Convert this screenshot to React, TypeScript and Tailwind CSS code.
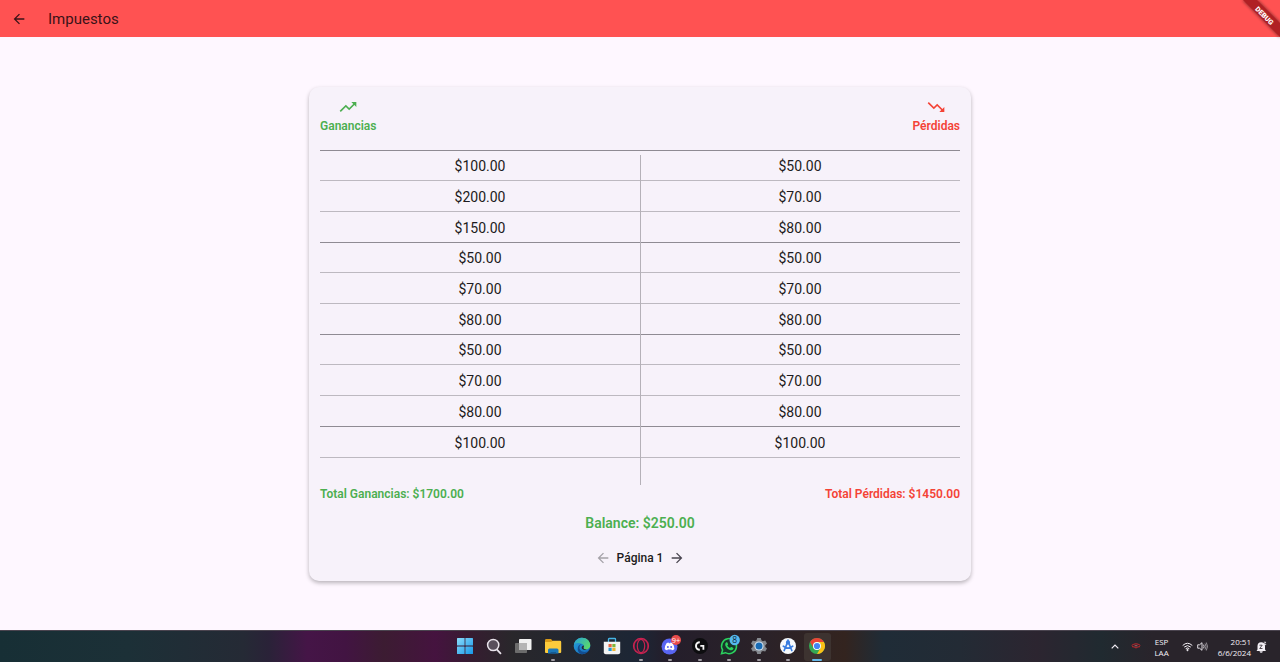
import type { ReactNode } from 'react';
import { MdArrowBack, MdArrowForward, MdTrendingDown, MdTrendingUp } from 'react-icons/md';

const rows: [number, number][] = [
  [100, 50],
  [200, 70],
  [150, 80],
  [50, 50],
  [70, 70],
  [80, 80],
  [50, 50],
  [70, 70],
  [80, 80],
  [100, 100],
];

const money = (value: number) => `$${value.toFixed(2)}`;

function DebugBanner() {
  return (
    <svg className="absolute top-0 right-0" width="40" height="40" viewBox="0 0 40 40" aria-hidden="true">
      <defs>
        <filter id="bannerShadow" x="-20%" y="-20%" width="140%" height="140%">
          <feGaussianBlur stdDeviation="1.6" />
        </filter>
      </defs>
      <path d="M2 0H18L40 22V38Z" fill="#000" opacity="0.4" filter="url(#bannerShadow)" />
      <path d="M3 0H17L40 23V37Z" fill="#b02024" />
      <text
        transform="translate(24.6 15.6) rotate(45)"
        y="2.6"
        textAnchor="middle"
        fontSize="7"
        fontWeight="900"
        fontFamily="Roboto, sans-serif"
        fill="#fff"
      >
        DEBUG
      </text>
    </svg>
  );
}

function TopBar() {
  return (
    <header className="relative flex h-[37px] shrink-0 items-center gap-[21px] bg-[#ff5252] pl-[11px] text-[#3a1318]">
      <button type="button" aria-label="Atrás">
        <MdArrowBack size={16} />
      </button>
      <h1 className="text-[15px] leading-5">Impuestos</h1>
      <DebugBanner />
    </header>
  );
}

function TaxCard() {
  return (
    <section className="w-full max-w-[662px] rounded-[10px] bg-[#f7f2fa] px-[11px] pt-[10px] pb-[13px] shadow-[0_2px_4px_rgba(0,0,0,0.28)]">
      <div className="flex justify-between text-[12px] leading-[18px] font-semibold">
        <div className="flex flex-col items-center text-[#4caf50]">
          <MdTrendingUp size={20} />
          <span>Ganancias</span>
        </div>
        <div className="flex flex-col items-center text-[#f44336]">
          <MdTrendingDown size={20} />
          <span>Pérdidas</span>
        </div>
      </div>

      <div className="relative mt-[15px] pb-[27px]">
        <table className="h-[308px] w-full table-fixed border-collapse border-t border-[#8f8b93] text-center text-[14px] leading-5 text-[#1d1b20]">
          <tbody>
            {rows.map(([gain, loss], index) => (
              <tr
                key={index}
                className={index % 3 === 2 ? 'border-b border-[#8f8b93]' : 'border-b border-[#bdb9c0]'}
              >
                <td className="pt-[2px]">{money(gain)}</td>
                <td className="pt-[2px]">{money(loss)}</td>
              </tr>
            ))}
          </tbody>
        </table>
        <div className="absolute top-[5px] bottom-0 left-1/2 w-px bg-[#b5b1b8]" />
      </div>

      <div className="flex justify-between text-[12px] leading-[18px] font-semibold">
        <span className="text-[#4caf50]">Total Ganancias: $1700.00</span>
        <span className="text-[#f44336]">Total Pérdidas: $1450.00</span>
      </div>
      <p className="mt-[10px] text-center text-[14px] leading-5 font-semibold text-[#4caf50]">Balance: $250.00</p>
      <nav className="mt-[15px] flex items-center justify-center gap-[6px] text-[12px] leading-5 font-medium text-[#1d1b20]">
        <button type="button" disabled aria-label="Página anterior" className="text-[#a5a2a8]">
          <MdArrowBack size={16} />
        </button>
        <span>Página 1</span>
        <button type="button" aria-label="Página siguiente" className="text-[#49454f]">
          <MdArrowForward size={16} />
        </button>
      </nav>
    </section>
  );
}

type AppItem = { name: string; running?: boolean; active?: boolean; art: ReactNode };

const apps: AppItem[] = [
  {
    name: 'Inicio',
    art: (
      <g fill="url(#winBlue)">
        <rect x="2" y="2" width="7.6" height="7.6" rx="0.5" />
        <rect x="10.4" y="2" width="7.6" height="7.6" rx="0.5" />
        <rect x="2" y="10.4" width="7.6" height="7.6" rx="0.5" />
        <rect x="10.4" y="10.4" width="7.6" height="7.6" rx="0.5" />
      </g>
    ),
  },
  {
    name: 'Buscar',
    art: (
      <g fill="#594f5c" stroke="#e8e2ea" strokeWidth="1.5" strokeLinecap="round">
        <path d="M13.2 13.8 16.500 17.300" strokeWidth="1.800" />
        <circle cx="9.2" cy="9" r="5.600" />
      </g>
    ),
  },
  {
    name: 'Vista de tareas',
    art: (
      <g>
        <rect x="2" y="7" width="12" height="10" rx="0.8" fill="#6c6c6c" />
        <rect x="6" y="3" width="12.5" height="11" rx="0.8" fill="#f1f1f1" />
        <path d="M6 7h8v7H6z" fill="#b5b5b5" />
      </g>
    ),
  },
  {
    name: 'Explorador',
    running: true,
    art: (
      <g>
        <path d="M2 4.2Q2 3 3.2 3H8l2 2.2v4H2z" fill="#d99a17" />
        <path d="M2 6h6l2-1.2h7q1.200 0 1.200 1.200v10q0 1-1 1H3q-1 0-1-1z" fill="#fccb3c" />
        <path d="M5 17.500v-3.500q0-1.500 1.500-1.500h7.500q1.500 0 1.500 1.500v3.500z" fill="#1c78b8" />
        <path d="M7.500 17.500v-1.500h5.500v1.500z" fill="#155b94" />
      </g>
    ),
  },
  {
    name: 'Edge',
    art: (
      <g>
        <circle cx="10" cy="10" r="8.300" fill="url(#edgeBlue)" />
        <path d="M2 8.500C3 4 6.500 1.700 10 1.700c5 0 8.300 3.600 8.300 7.500 0 2.600-2 4.200-4.300 4.200-2 0-2.900-.8-2.500-1.600.5-.8.6-1.300.3-2.200C10.800 7 5 5.800 2 8.500z" fill="url(#edgeGreen)" />
        <path d="M10 8.200c-2.800.8-3.200 4.400-1.200 6.300 1.900 1.800 5 2 7.700.2-1.500 2.200-4 3.600-6.500 3.600C6.500 17.500 5 14 6 11c.7-2 2.200-3 4-2.800z" fill="#134e91" />
        <path d="M11.800 9.600c.4 1-.3 1.600-.3 2.300 0 1 1.500 1.700 3.400 1.400-2 1.200-4.900.5-5.200-1.500-.1-1 .8-2.100 2.100-2.200z" fill="#2b292d" />
      </g>
    ),
  },
  {
    name: 'Microsoft Store',
    art: (
      <g>
        <path d="M6.500 7V3.200q0-.7.7-.7h5.600q.7 0 .7.700V7" fill="none" stroke="#46b6e6" strokeWidth="1.300" />
        <path d="M1.800 5.800h16.400v10.400q0 2-2 2H3.800q-2 0-2-2z" fill="#f3f3f3" />
        <path d="M6.500 8h3.200v3.200H6.500z" fill="#e9633c" />
        <path d="M10.300 8h3.200v3.200h-3.200z" fill="#7eb63a" />
        <path d="M6.500 11.800h3.200V15H6.500z" fill="#2598d4" />
        <path d="M10.300 11.800h3.200V15h-3.200z" fill="#edb431" />
      </g>
    ),
  },
  {
    name: 'Opera GX',
    running: true,
    art: (
      <g fill="none" stroke="#c92250">
        <circle cx="10" cy="10" r="7.500" strokeWidth="1.300" />
        <ellipse cx="10" cy="10" rx="3.700" ry="6.700" strokeWidth="1.200" />
        <path d="M7 3.700C2 6 2 14 7 16.300M13 3.700c5 2.300 5 10.300 0 12.600" strokeWidth="0.700" />
      </g>
    ),
  },
  {
    name: 'Discord',
    running: true,
    art: (
      <g>
        <circle cx="9.500" cy="10.500" r="8" fill="#5865f2" />
        <path d="M6.500 7.200q1-.6 2-.7l.4.700h1.300l.4-.700q1 .1 2 .7 1.800 2.600 1.800 5.800-1.200 1.200-2.600 1.300l-.6-1q-1.700.5-3.300 0l-.6 1q-1.400-.1-2.600-1.300 0-3.200 1.800-5.800z" fill="#fff" />
        <circle cx="7.900" cy="10.900" r="1" fill="#5865f2" />
        <circle cx="11.200" cy="10.900" r="1" fill="#5865f2" />
        <circle cx="16" cy="4" r="5" fill="#e84c4c" />
        <text x="16" y="6.600" textAnchor="middle" fontSize="7.500" fill="#fff">9+</text>
      </g>
    ),
  },
  {
    name: 'Logitech G HUB',
    running: true,
    art: (
      <g>
        <circle cx="10" cy="10" r="8" fill="#0d0d0f" />
        <path d="M9.800 6.200A3.800 3.800 0 1 0 9.800 13.800" fill="none" stroke="#f4f4f4" strokeWidth="2" />
        <path d="M10.300 9h4v4.800h-1.800v-3h-2.200z" fill="#f4f4f4" />
      </g>
    ),
  },
  {
    name: 'WhatsApp',
    running: true,
    art: (
      <g>
        <path d="M2.500 17.700 3.600 14a7.500 7.500 0 1 1 2.800 2.700z" fill="#18352a" stroke="#2bd25e" strokeWidth="1.500" />
        <path d="M7.200 6.300q.8-.4 1.200.3l.7 1.600q0 .5-.8 1.200 1 1.900 2.700 2.700l1-1q.3-.2.7 0l1.600.8q.4.300 0 1.100-.8 1.600-2.800 1.200-3.800-1-5.300-5Q5.900 7.400 7.200 6.300z" fill="#2bd25e" />
        <circle cx="15.700" cy="4" r="5.200" fill="#55b8ee" />
        <text x="15.700" y="7" textAnchor="middle" fontSize="8.500" fill="#132a3a">8</text>
      </g>
    ),
  },
  {
    name: 'Configuración',
    running: true,
    art: (
      <g>
        <path d="M8.200 2h3.600l.6 2.300 1.500.9 2.300-.7 1.800 3.100-1.700 1.600v1.700l1.700 1.600-1.800 3.100-2.300-.7-1.500.9-.6 2.200H8.200l-.6-2.200-1.500-.9-2.300.7L2 12.500l1.700-1.600V9.200L2 7.600l1.800-3.100 2.300.7 1.500-.9z" fill="#85898f" />
        <circle cx="10" cy="10" r="4.600" fill="#d5e6f5" />
        <circle cx="10" cy="10" r="3.500" fill="#186bb5" />
      </g>
    ),
  },
  {
    name: 'Android Studio',
    running: true,
    art: (
      <g>
        <circle cx="10" cy="10" r="8" fill="#f7fafc" />
        <g fill="none" stroke="#397de0" strokeWidth="1.700" strokeLinecap="round">
          <path d="M9.400 6.600 6.200 14.500M10.600 6.600l3.200 7.900M5.300 10.200q4.700 4 9.400 0M10 4v1.500" />
          <circle cx="10" cy="6.500" r="1.300" />
        </g>
      </g>
    ),
  },
  {
    name: 'Chrome',
    active: true,
    art: (
      <g>
        <circle cx="10" cy="10" r="8" fill="#35a853" />
        <path d="M3.070 6A8 8 0 0 1 16.930 6H10a4 4 0 0 0-3.460 6z" fill="#ea4335" />
        <path d="M16.930 6A8 8 0 0 1 10 18l3.460-6A4 4 0 0 0 10 6z" fill="#fbc116" />
        <circle cx="10" cy="10" r="4" fill="#fff" />
        <circle cx="10" cy="10" r="3.100" fill="#4285f4" />
      </g>
    ),
  },
];

function TaskbarApp({ name, running, active, art }: AppItem) {
  return (
    <button
      type="button"
      aria-label={name}
      className={
        active
          ? 'flex h-[28px] w-[27px] flex-col items-center justify-between rounded-[3px] bg-[#3d3330] pt-[3px]'
          : 'flex h-[28px] w-[27px] flex-col items-center justify-between pt-[3px]'
      }
    >
      <svg width="20" height="20" viewBox="0 0 20 20" className="overflow-visible" fontFamily="Open Sans, sans-serif">
        {art}
      </svg>
      {running && <span className="h-[2px] w-[4px] rounded-full bg-[#a09ca3]" />}
      {active && <span className="h-[2px] w-[10px] rounded-full bg-[#65b8e8]" />}
    </button>
  );
}

function SystemTray() {
  return (
    <div className="flex items-center justify-end pr-[13px] font-['Open_Sans','Noto_Sans',sans-serif] text-[8px] leading-[11px] text-[#f4f0f6]">
      <svg className="mr-[11px]" width="10" height="10" viewBox="0 0 10 10" fill="none" stroke="currentColor" strokeWidth="1.2">
        <path d="m1.700 6.300 3.300-3.300 3.300 3.300" />
      </svg>
      <svg className="mr-[13px]" width="10" height="10" viewBox="0 0 10 10" fill="none" stroke="#c4262c" strokeWidth="1">
        <path d="M.7 3.400Q5 .2 9.300 3.400" />
        <path d="M1 4.600Q3.200 4.600 5 6q1.800-1.400 4-1.400" />
        <path d="M3.600 3.800h2.800" stroke="#e07a7e" strokeWidth="0.800" />
      </svg>
      <div className="mr-[13px] text-center">
        <div>ESP</div>
        <div>LAA</div>
      </div>
      <svg className="mr-[4px]" width="11" height="11" viewBox="0 0 11 11" fill="none" stroke="currentColor" strokeWidth="1">
        <path d="M.7 4.500Q5.500 0 10.300 4.500M2.200 6.100q3.300-3 6.600 0M3.700 7.700q1.800-1.600 3.600 0" />
        <circle cx="5.500" cy="9" r="0.700" fill="currentColor" />
      </svg>
      <svg className="mr-[10px]" width="11" height="11" viewBox="0 0 11 11" fill="none" stroke="currentColor" strokeWidth="0.900">
        <path d="M.7 3.800h1.800L5 1.700v7.600L2.500 7.200H.7zM6.600 3.700q1 1.800 0 3.600" />
        <path d="M8 2.500q2 3 0 6M9.300 1.500q2.400 4 0 8" opacity="0.600" />
      </svg>
      <div className="mr-[5px] text-right">
        <div>20:51</div>
        <div>6/6/2024</div>
      </div>
      <svg width="11" height="12" viewBox="0 0 11 12" fill="currentColor">
        <path d="M1.500 8.500V5Q1.500 1.200 5.200 1.200T9 5v3.500l1 1.400H.5zM3.500 10.300h3.300q-.2 1.500-1.600 1.500t-1.700-1.500z" />
        <path d="M3.500 4.200h2.700L3.700 7.500h2.800" fill="none" stroke="#2b252b" strokeWidth="0.800" />
        <path d="M7.800 1.200h2L8 3.600h2.200" fill="none" stroke="currentColor" strokeWidth="0.800" />
      </svg>
    </div>
  );
}

function Taskbar() {
  return (
    <footer className="grid h-[32px] shrink-0 grid-cols-[1fr_auto_1fr] items-center border-t border-[#4a444f] bg-[linear-gradient(90deg,#172f35_0%,#1c3037_10%,#252a35_19%,#2a2238_21%,#451547_24%,#421442_27%,#3c1c32_30%,#45133f_34%,#351d30_37%,#29272b_40%,#1c2635_50%,#241e2b_52%,#2b2228_60%,#33241f_66%,#1f2c37_69%,#232b35_75%,#2c2530_81%,#202a30_86%,#29242b_90%)]">
      <span />
      <div className="flex w-[382px] items-center justify-between pl-[2px]">
        {apps.map((app) => (
          <TaskbarApp key={app.name} {...app} />
        ))}
      </div>
      <SystemTray />
      <svg width="0" height="0" className="absolute" aria-hidden="true">
        <defs>
          <linearGradient id="winBlue" gradientUnits="userSpaceOnUse" x1="2" y1="2" x2="18" y2="18">
            <stop offset="0" stopColor="#8adcfb" />
            <stop offset="1" stopColor="#1798e8" />
          </linearGradient>
          <linearGradient id="edgeBlue" x1="0" y1="0" x2="1" y2="1">
            <stop offset="0" stopColor="#27a3dd" />
            <stop offset="1" stopColor="#1464b8" />
          </linearGradient>
          <linearGradient id="edgeGreen" x1="0" y1="0" x2="1" y2="0.6">
            <stop offset="0" stopColor="#239fdc" />
            <stop offset="1" stopColor="#5ad86c" />
          </linearGradient>
        </defs>
      </svg>
    </footer>
  );
}

export default function App() {
  return (
    <div className="flex min-h-screen flex-col bg-[#fef7ff] font-[Roboto,sans-serif]">
      <TopBar />
      <main className="flex flex-1 items-center justify-center">
        <TaxCard />
      </main>
      <Taskbar />
    </div>
  );
}
